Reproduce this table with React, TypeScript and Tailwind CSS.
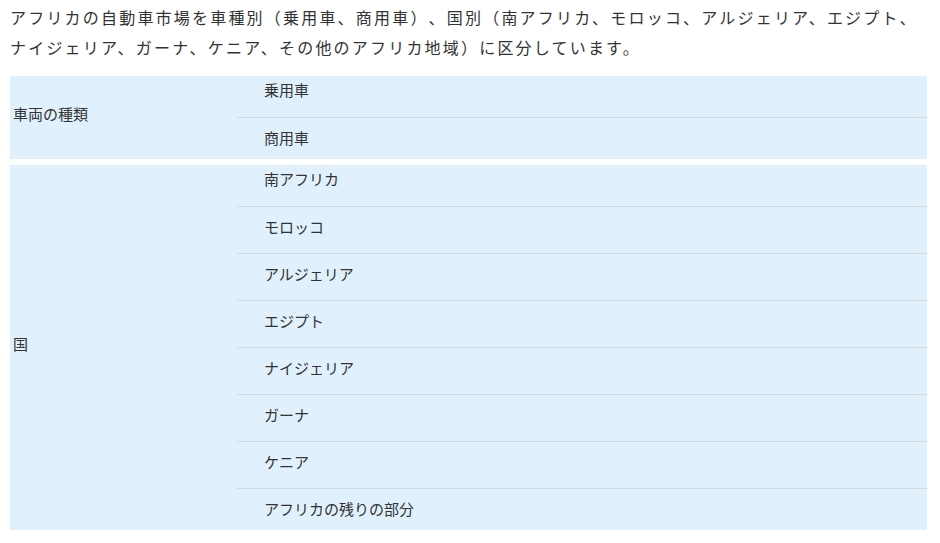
const groups = [
  { label: "車両の種類", items: ["乗用車", "商用車"] },
  {
    label: "国",
    items: [
      "南アフリカ",
      "モロッコ",
      "アルジェリア",
      "エジプト",
      "ナイジェリア",
      "ガーナ",
      "ケニア",
      "アフリカの残りの部分",
    ],
  },
];

const App = () => {
  return (
    <div className="bg-white w-[940px] h-[543px] overflow-hidden text-[#333] font-['Noto_Sans_CJK_JP','Noto_Sans',sans-serif]">
      <p className="w-[914px] ml-[10px] pt-[2px] text-[16px] leading-[30px] tracking-[2.2px] [text-spacing-trim:space-all]">
        アフリカの自動車市場を車種別（乗用車、商用車）、国別（南アフリカ、モロッコ、アルジェリア、エジプト、ナイジェリア、ガーナ、ケニア、その他のアフリカ地域）に区分しています。
      </p>

      <div className="mt-[14px] ml-[10px] w-[917px] flex flex-col gap-[6px]">
        {groups.map((g) => (
          <div key={g.label} className="flex bg-[#e0f1fd]">
            <div className="w-[227px] shrink-0 flex items-center pl-[3px] pb-[6px] text-[15px]">
              {g.label}
            </div>
            <ul className="flex-1">
              {g.items.map((item, i) => (
                <li
                  key={item}
                  className={
                    "pl-[27px] text-[15px] leading-[24px] " +
                    (i === 0
                      ? "pt-[2px] pb-[15px]"
                      : i === g.items.length - 1
                        ? "border-t border-[#d3d9de] pt-[8px] pb-[9px]"
                        : "border-t border-[#d3d9de] pt-[8px] pb-[14px]")
                  }
                >
                  {item}
                </li>
              ))}
            </ul>
          </div>
        ))}
      </div>
    </div>
  );
};

export default App;
